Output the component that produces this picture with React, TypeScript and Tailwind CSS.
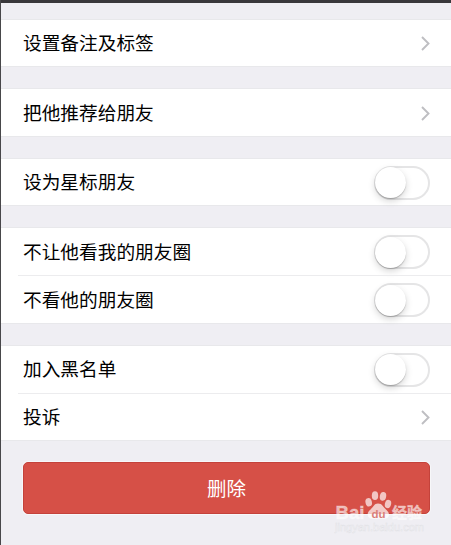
import { useState } from "react";

type RowProps = {
  label: string;
  type: "link" | "switch";
}

function Chevron() {
  return (
    <svg width="9" height="15" viewBox="0 0 9 15" fill="none" className="shrink-0 mt-px">
      <path d="M1 1 L7.5 7.5 L1 14" stroke="#bebec2" strokeWidth="1.9" />
    </svg>
  )
}

function Toggle() {
  const [isOn, setIsOn] = useState(false)

  return (
    <button
      onClick={() => setIsOn(!isOn)}
      className={`flex items-center w-14 h-[34px] mt-px shrink-0 rounded-full border-2 ${isOn ? "justify-end bg-[#4cd964] border-[#4cd964]" : "justify-start bg-white border-[#e5e5e6]"}`}
    >
      <span className="w-[31px] h-[31px] -ml-px shrink-0 rounded-full bg-white shadow-[0_1px_1px_rgba(0,0,0,0.22),0_3px_7px_rgba(0,0,0,0.17)]" />
    </button>
  )
}

function Row({ label, type }: RowProps) {
  return (
    <div className="flex flex-row justify-between items-center flex-1 min-h-0 pl-[22px] pr-[21px]">
      <p className="text-[18.7px] leading-6 pb-0.5 text-black">{label}</p>
      {type === "link" ? <Chevron /> : <Toggle />}
    </div>
  )
}

function Divider() {
  return <div className="h-px shrink-0 ml-[17px] bg-[#ececee]" />
}

function Watermark() {
  return (
    <div className="absolute left-[333px] top-[490px] w-[92px] h-[45px] pointer-events-none">
      <svg width="92" height="45" viewBox="0 0 92 45">
        <g fill="#ffffff" fillOpacity="0.68">
          <ellipse cx="34.7" cy="12.3" rx="3.2" ry="4.2" transform="rotate(-15 34.7 12.3)" />
          <ellipse cx="41" cy="5.7" rx="3.2" ry="4.4" />
          <ellipse cx="49" cy="6.3" rx="3.2" ry="4.4" transform="rotate(10 49 6.3)" />
          <ellipse cx="54" cy="14" rx="3.1" ry="4.2" transform="rotate(15 54 14)" />
        </g>
        <path d="M44 13.5 C40 13.5 39.5 17 36 20 C31.5 24 34 29 39 28.7 H49.5 C55 29 57 24 52.5 20 C49 17 48.5 13.5 44 13.5 Z" fill="#ffffff" fillOpacity="0.7" />
        <g fill="#ffffff" fillOpacity="0.6" stroke="#ffffff" strokeOpacity="0.3" strokeWidth="0.8">
          <text x="1.5" y="28.7" fontSize="19" fontWeight="700" textLength="29" lengthAdjust="spacingAndGlyphs" fontFamily="Liberation Sans, sans-serif">Bai</text>
          <text x="58" y="27.8" fontSize="15" fontWeight="700" textLength="30" fontFamily="Noto Sans CJK SC, sans-serif">经验</text>
        </g>
        <text x="37.5" y="27.5" fontSize="11.5" fontWeight="700" textLength="14" lengthAdjust="spacingAndGlyphs" fill="#d9807a" fontFamily="Liberation Sans, sans-serif">du</text>
        <text x="1" y="40.5" fontSize="10" textLength="89" lengthAdjust="spacingAndGlyphs" fill="#fafafc" stroke="#d9d9de" strokeWidth="0.5" strokeOpacity="0.7" fontFamily="Liberation Sans, sans-serif">jingyan.baidu.com</text>
      </svg>
    </div>
  )
}

export default function App() {
  return (
    <div className="relative flex flex-col w-[451px] h-[545px] overflow-hidden bg-[#efeef3] border-l border-l-[#48474a] font-['Noto_Sans_CJK_SC',sans-serif]">
      <div className="h-[3px] shrink-0 bg-[#39373b]" />

      <div className="flex flex-col h-12 shrink-0 mt-4 bg-white border-y border-y-[#e8e8eb]">
        <Row label="设置备注及标签" type="link" />
      </div>

      <div className="flex flex-col h-[49px] shrink-0 mt-[21px] bg-white border-y border-y-[#e8e8eb]">
        <Row label="把他推荐给朋友" type="link" />
      </div>

      <div className="flex flex-col h-12 shrink-0 mt-[21px] bg-white border-y border-y-[#e8e8eb]">
        <Row label="设为星标朋友" type="switch" />
      </div>

      <div className="flex flex-col h-[97px] shrink-0 mt-[21px] bg-white border-y border-y-[#e8e8eb]">
        <Row label="不让他看我的朋友圈" type="switch" />
        <Divider />
        <Row label="不看他的朋友圈" type="switch" />
      </div>

      <div className="flex flex-col h-24 shrink-0 mt-[21px] bg-white border-y border-y-[#e8e8eb]">
        <Row label="加入黑名单" type="switch" />
        <Divider />
        <Row label="投诉" type="link" />
      </div>

      {/* DELETE */}
      <button className="h-[52px] shrink-0 mt-[21px] ml-[22px] mr-[21px] rounded-[5px] border border-[#c4423b] bg-[#d65047] text-white text-[19.5px] leading-6 shadow-[0_0_0_1px_rgba(255,255,255,0.5)]">
        删除
      </button>

      <Watermark />
    </div>
  )
}
